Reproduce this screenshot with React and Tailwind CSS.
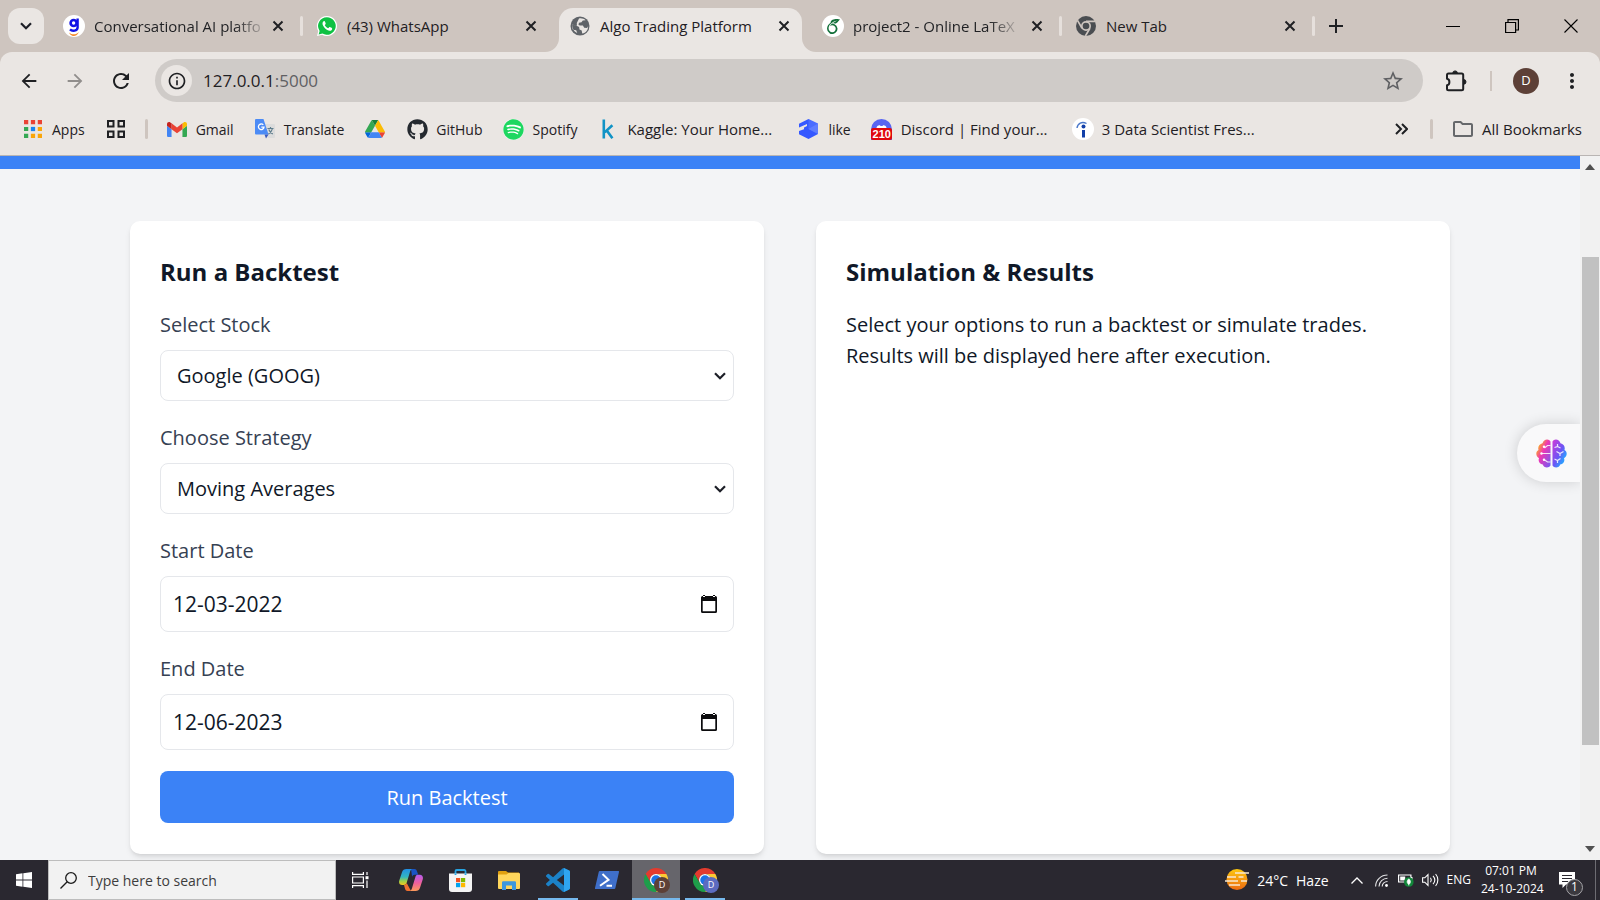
import React from "react";
import { FaGithub, FaSpotify } from "react-icons/fa";
import { SiOverleaf } from "react-icons/si";
import {
  MdArrowBack,
  MdArrowForward,
  MdRefresh,
  MdOutlineInfo,
  MdStarOutline,
  MdMoreVert,
  MdOutlineFolder,
} from "react-icons/md";

/* ---------- icons ---------- */

const Cross = () => (
  <svg viewBox="0 0 12 12" className="size-3" stroke="#1f2023" strokeWidth="2" fill="none">
    <path d="M1.5 1.5l9 9M10.5 1.5l-9 9" />
  </svg>
);

const ChevronDown = () => (
  <svg viewBox="0 0 12 8" className="h-2 w-3" fill="none" stroke="#1d1f27" strokeWidth="2.2">
    <path d="M1 1.2l5 5 5-5" />
  </svg>
);

const GlobeIcon = () => (
  <svg viewBox="0 0 20 20" className="size-5">
    <circle cx="10" cy="10" r="9.5" fill="#5f6368" />
    <path
      fill="#eae6e3"
      d="M9 2.400c2.800-.4 5 .3 6.600 1.800l-2.800.3-1.300 1.800-2.600.5-.4 1.900 1.300.9h3.100l1.300 2.200 2.900.2 1-1.700c.2 3.400-2.200 6.700-5.900 7.300l-.5-3-2.200-1.200-.4-2.300L6 9.400l-3.500-.6c-.5 1.700-.3 3.500.4 4.900l3.300.6 1 2.700c-3.500-1.600-5.200-5.200-4.600-8.200l2.800.6h1.500L6.800 7z"
    />
  </svg>
);

const LetterGIcon = () => (
  <svg viewBox="0 0 22 22" className="size-[22px]">
    <circle cx="11" cy="11" r="11" fill="#fff" />
    <circle cx="10.6" cy="8" r="3" fill="none" stroke="#1212e6" strokeWidth="2.6" />
    <path d="M14.6 3.6v9c0 3.4-5.4 4.2-7.6 1.8" fill="none" stroke="#1212e6" strokeWidth="2.4" />
    <path d="M6 17.4c3 2.6 7 2.6 10-.4-1.600 3.400-3.600 4-5 4s-4-.8-5-3.600z" fill="#f58a2a" />
  </svg>
);

const WhatsappIcon = () => (
  <svg viewBox="0 0 22 22" className="size-[22px]">
    <path d="M11 1a10 10 0 1 1-4.900 18.700L1 21l1.300-5A10 10 0 0 1 11 1z" fill="#fff" />
    <path d="M11 2.200a8.800 8.800 0 1 1-4.500 16.400l-3.900 1 1-3.700A8.800 8.800 0 0 1 11 2.200z" fill="#0fc143" />
    <path
      d="M8.300 6c-.5 0-1.800.8-1.800 2.500 0 2.900 4.200 7.300 7.200 7.300 1.500 0 2.500-1 2.500-2.100 0-.6-2.200-1.700-2.700-1.600-.5.100-.9 1.300-1.400 1.200-1-.2-3-2.100-3.300-3-.1-.5.900-1 .9-1.500C9.700 8.100 8.900 6 8.300 6z"
      fill="#fff"
    />
  </svg>
);

const OverleafIcon = () => (
  <span className="flex size-[22px] items-center justify-center rounded-full bg-white text-[#13703a]">
    <SiOverleaf className="size-[15px]" />
  </span>
);

const ChromeGray = () => (
  <svg viewBox="0 0 48 48" className="size-5">
    <circle cx="24" cy="24" r="24" fill="#4a4d51" />
    <circle cx="24" cy="24" r="10" fill="none" stroke="#cec5bf" strokeWidth="4" />
    <path d="M24 13h22M14.500 29.500L3.500 10.500M33.500 29.500L22.500 48" stroke="#cec5bf" strokeWidth="4" />
  </svg>
);

const ChromeColor = () => (
  <svg viewBox="0 0 48 48" className="size-6">
    <path fill="#e33b2e" d="M24 12h20.800A24 24 0 0 0 3.200 12l10.400 18A12 12 0 0 1 24 12z" />
    <path fill="#fcc934" d="M44.800 12H24a12 12 0 0 1 10.400 18L24 48a24 24 0 0 0 20.800-36z" />
    <path fill="#1e9e4a" d="M3.200 12A24 24 0 0 0 24 48l10.400-18a12 12 0 0 1-20.800 0z" />
    <circle cx="24" cy="24" r="12" fill="#fff" />
    <circle cx="24" cy="24" r="9.500" fill="#1a73e8" />
  </svg>
);

const AppsIcon = () => (
  <svg viewBox="0 0 17 17" className="size-[18px]">
    <path fill="#ea4335" d="M0 0h4v4H0zM6.500 0h4v4h-4zM13 0h4v4h-4z" />
    <path fill="#34a853" d="M0 6.500h4v4H0zM0 13h4v4H0z" />
    <path fill="#1a85f0" d="M6.500 6.500h4v4h-4z" />
    <path fill="#f9a60a" d="M13 6.500h4v4h-4zM6.500 13h4v4h-4zM13 13h4v4h-4z" />
  </svg>
);

const TabGroupIcon = () => (
  <svg viewBox="0 0 18 18" className="size-[18px]" fill="none" stroke="#1f2023" strokeWidth="2">
    <path d="M1 1h5.500v5.500H1zM11.500 1H17v5.500h-5.500zM1 11.500h5.500V17H1zM11.500 11.500H17V17h-5.500z" />
  </svg>
);

const GmailIcon = () => (
  <svg viewBox="52 42 88 66" className="h-[15px] w-5">
    <path fill="#4285f4" d="M58 108h14V74L52 59v43c0 3.320 2.690 6 6 6" />
    <path fill="#34a853" d="M120 108h14c3.320 0 6-2.690 6-6V59l-20 15" />
    <path fill="#fbbc04" d="M120 48v26l20-15v-8c0-7.420-8.470-11.650-14.400-7.200" />
    <path fill="#ea4335" d="M72 74V48l24 18 24-18v26L96 92" />
    <path fill="#c5221f" d="M52 51v8l20 15V48l-5.600-4.200c-5.940-4.450-14.400-.22-14.400 7.200" />
  </svg>
);

const TranslateIcon = () => (
  <svg viewBox="0 0 20 20" className="size-5">
    <path fill="#dcdcdc" d="M8 5h11a1 1 0 0 1 1 1v12a1 1 0 0 1-1 1h-6z" />
    <path fill="none" stroke="#5f7d8c" strokeWidth="1.200" d="M12.500 9.500h6M15.500 8v1.500M17.500 9.500c-.5 2.500-2 4-4 5.500M13.800 10.500c.8 2 2.200 3.500 4 4.500" />
    <path fill="#4c8bf5" d="M1 0h7.500l5 15.500H1a1 1 0 0 1-1-1V1a1 1 0 0 1 1-1z" />
    <path fill="#3a5bc0" d="M9.500 15.500h4l-2.500 4z" />
    <path fill="none" stroke="#fff" strokeWidth="1.300" d="M8.300 5.900A2.800 2.800 0 1 0 9 8.100H6.300" />
  </svg>
);

const DriveIcon = () => (
  <svg viewBox="0 0 87.300 78" className="h-[18px] w-5">
    <path fill="#0066da" d="m6.600 66.850 3.850 6.650c.8 1.400 1.950 2.500 3.300 3.300l13.750-23.800h-27.500c0 1.550.4 3.100 1.200 4.500z" />
    <path fill="#34a853" d="m43.650 25-13.750-23.800c-1.350.8-2.500 1.900-3.300 3.300l-25.400 44a9.060 9.060 0 0 0-1.200 4.500h27.500z" />
    <path fill="#ea4335" d="m73.550 76.800c1.350-.8 2.500-1.900 3.300-3.300l1.600-2.750 7.650-13.250c.8-1.400 1.200-2.950 1.200-4.500h-27.500l5.850 11.500z" />
    <path fill="#188038" d="m43.650 25 13.750-23.800c-1.350-.8-2.900-1.200-4.500-1.200h-18.500c-1.600 0-3.150.45-4.500 1.200z" />
    <path fill="#4285f4" d="m59.800 53h-32.300l-13.750 23.800c1.350.8 2.900 1.200 4.500 1.200h50.800c1.600 0 3.150-.45 4.500-1.200z" />
    <path fill="#fbbc04" d="m73.400 26.500-12.700-22c-.8-1.400-1.950-2.500-3.300-3.300l-13.750 23.800 16.150 28h27.450c0-1.550-.4-3.100-1.200-4.500z" />
  </svg>
);

const KaggleIcon = () => (
  <svg viewBox="0 0 12 20" className="h-5 w-3" fill="none" stroke="#1093c6" strokeWidth="2.600">
    <path d="M1.800.5v19M10.400 6.300L2.600 13.400M4.600 11.200l5.800 8" />
  </svg>
);

const CubeIcon = () => (
  <svg viewBox="0 0 20 20" className="size-5">
    <path fill="#3558ff" d="M9.500 0L0 4.800v3.700l8-3.500v2L5 8.600v1.700L0 12v3.200L9.500 20l9.500-5V10z" />
    <path fill="#4a6cff" d="M9.500 0L19 4.500V15l-9.500-5z" />
    <path fill="#5f7dff" d="M9.500 10L19 4.500V15z" />
  </svg>
);

const DiscordBadge = () => (
  <span className="relative block size-[21px] overflow-hidden rounded-t-full bg-[#5865f2]">
    <svg viewBox="0 0 21 21" className="absolute inset-0 size-[21px]">
      <path fill="#fff" d="M6 7.500c1-1 2-1.200 3-1.200l.5.700h2l.5-.7c1 0 2 .2 3 1.200l1 2.500H5z" />
      <rect x="0" y="9" width="21" height="12" rx="2" fill="#e0070d" />
    </svg>
    <span className="absolute inset-x-0 bottom-0 text-center font-['Liberation_Sans',sans-serif] text-[11px] leading-[11px] font-bold text-white">210</span>
  </span>
);

const IndeedIcon = () => (
  <svg viewBox="0 0 22 22" className="size-[22px]">
    <circle cx="11" cy="11" r="11" fill="#fff" />
    <circle cx="11.500" cy="8.500" r="2" fill="#123fa8" />
    <path d="M11.500 12v7.500" stroke="#123fa8" strokeWidth="3" />
    <path d="M5 10c.5-4.500 5-7 9.500-4.500" fill="none" stroke="#4a77c9" strokeWidth="1.400" />
  </svg>
);

const PuzzleIcon = () => (
  <svg viewBox="0 0 22 22" className="size-[22px]">
    <path
      d="M2 5a1.500 1.500 0 0 1 1.500-1.500h13.200a1.500 1.500 0 0 1 1.500 1.500v13.700a1.500 1.500 0 0 1-1.500 1.500H3.500A1.500 1.500 0 0 1 2 18.700v-3.400c3.200-.4 3.200-6.200 0-6.600z"
      fill="none"
      stroke="#1f2023"
      strokeWidth="2"
      strokeLinejoin="round"
    />
    <path d="M7.800 3.200a2.300 2.300 0 0 1 4.600 0zM18.700 9.600a2.300 2.300 0 0 1 0 4.600z" fill="#1f2023" stroke="#1f2023" />
  </svg>
);

const CalendarIcon = () => (
  <svg viewBox="0 0 16 18" className="h-[18px] w-4">
    <path fill="#0b0b0d" d="M2 0h2v2H2zM12 0h2v2h-2zM0 2.500A1.500 1.500 0 0 1 1.500 1h13A1.500 1.500 0 0 1 16 2.500v14a1.500 1.500 0 0 1-1.500 1.500h-13A1.500 1.500 0 0 1 0 16.500zM1.700 6v10.300h12.600V6z" fillRule="evenodd" />
  </svg>
);

const BrainIcon = () => (
  <svg viewBox="0 0 31 29" className="h-[29px] w-[31px]">
    <defs>
      <linearGradient id="brain-left" x1="0" y1="0" x2="1" y2="1">
        <stop offset="0.200" stopColor="#fba02f" />
        <stop offset="0.450" stopColor="#ee36b4" />
        <stop offset="1" stopColor="#6d5cf6" />
      </linearGradient>
      <linearGradient id="brain-right" x1="0" y1="0" x2="1" y2="1">
        <stop offset="0" stopColor="#d13ad8" />
        <stop offset="0.500" stopColor="#6d55f4" />
        <stop offset="0.750" stopColor="#2f9bff" />
      </linearGradient>
    </defs>
    <path fill="url(#brain-left)" d="M14.500 2.500v24C13 29.500 7.500 29 6.800 25.500 3.500 25 1.800 22 3 19.200-.5 17.200-.5 12.500 2.500 11 1.500 7.500 3.500 4.800 6.500 4.200 7.500-.2 13-.8 14.500 2.500z" />
    <path fill="url(#brain-right)" d="M16.500 2.500v24c1.500 3 7 2.500 7.700-1 3.300-.5 5-3.500 3.800-6.300 3.500-2 3.500-6.700.5-8.200 1-3.500-1-6.200-4-6.800-1-4.400-6.500-5-8-1.700z" />
    <g fill="none" stroke="#fff" strokeWidth="1.200" opacity=".85">
      <path d="M14.500 6.500h-3L8.500 9M14.500 14.500H5.500M14.500 23h-3L8 20.500" />
      <path d="M18.500 8.500l3-1v-2.500M21.500 7.500l3 1.500M20.500 12.500l3.500 2 3.500-2M24 14.500v2.500M18.500 20l3 1.500 3-2M21.500 21.500v2.500" />
    </g>
    <g fill="#fff">
      <circle cx="8" cy="7.800" r="1.200" />
      <circle cx="5.500" cy="14.500" r="1.200" />
      <circle cx="8" cy="20.800" r="1.200" />
    </g>
  </svg>
);

const CopilotIcon = () => (
  <svg viewBox="0 0 24 22" className="h-[22px] w-6">
    <defs>
      <linearGradient id="cp-a" x1="0" y1="0" x2="0" y2="1">
        <stop offset="0" stopColor="#2190e6" />
        <stop offset="0.500" stopColor="#34b6c0" />
        <stop offset="0.750" stopColor="#9bd04a" />
        <stop offset="1" stopColor="#f4c61d" />
      </linearGradient>
      <linearGradient id="cp-b" x1="0" y1="0" x2="0" y2="1">
        <stop offset="0" stopColor="#b65cf0" />
        <stop offset="0.500" stopColor="#ee5f9c" />
        <stop offset="1" stopColor="#fb9a5a" />
      </linearGradient>
    </defs>
    <path fill="#1b54c4" d="M12 0h3.500c1.300 0 2 .8 2.400 2l1.300 3.800h-3.400c-1.500 0-2.300.8-2.700 2z" />
    <path fill="url(#cp-a)" d="M7.500 0h6c-1.200 0-1.900.9-2.400 2.400L7.600 14c-.4 1.300-1.200 2-2.600 2H3.200C.7 16-.4 14 .2 11.800L3 3.200C3.700 1.100 5.200 0 7.500 0z" />
    <path fill="#f07030" d="M12 22H8.500c-1.300 0-2-.8-2.400-2L5 16c1.500 0 2.300-.8 2.700-2z" />
    <path fill="url(#cp-b)" d="M16.500 22h-6c1.200 0 1.900-.9 2.400-2.400L16.400 8c.4-1.300 1.200-2.200 2.600-2.200h1.800c2.500 0 3.600 2.200 3 4.400L21 18.800c-.7 2.100-2.200 3.200-4.500 3.200z" />
  </svg>
);

const StoreIcon = () => (
  <svg viewBox="0 0 23 23" className="size-[23px]">
    <path d="M6.500 6V2.200A1.200 1.200 0 0 1 7.700 1h7.600a1.200 1.200 0 0 1 1.200 1.200V6" fill="none" stroke="#27a3e0" strokeWidth="1.800" />
    <path d="M0 4.500h23V20a3 3 0 0 1-3 3H3a3 3 0 0 1-3-3z" fill="#f4f4f4" />
    <path d="M6.500 4.500V6M16.500 4.500V6" stroke="#27a3e0" strokeWidth="1.800" />
    <path fill="#f25022" d="M7 9h4.200v4.200H7z" />
    <path fill="#7fba00" d="M12 9h4.200v4.200H12z" />
    <path fill="#00a4ef" d="M7 14h4.200v4.200H7z" />
    <path fill="#ffb900" d="M12 14h4.200v4.200H12z" />
  </svg>
);

const ExplorerIcon = () => (
  <svg viewBox="0 0 22 19" className="h-[19px] w-[22px]">
    <path fill="#e0a010" d="M0 1a1 1 0 0 1 1-1h7l2 1.500H21V5H0z" />
    <path fill="#ffd65c" d="M0 3.500h8.500L10.500 2H21a1 1 0 0 1 1 1v14a1 1 0 0 1-1 1H1a1 1 0 0 1-1-1z" />
    <path fill="#3c97dd" d="M4 19v-7.500a1.200 1.200 0 0 1 1.200-1.200h11.600a1.200 1.200 0 0 1 1.200 1.200V19h-4v-4.500H8V19z" />
  </svg>
);

const VscodeIcon = () => (
  <svg viewBox="0 0 24 24" className="size-6">
    <path
      fill="#1b82c8"
      d="M23.150 2.587L18.210.21a1.494 1.494 0 0 0-1.705.29l-9.460 8.630-4.120-3.128a.999.999 0 0 0-1.276.057L.327 7.261A1 1 0 0 0 .326 8.740L3.899 12 .326 15.260a1 1 0 0 0 .001 1.479L1.650 17.940a.999.999 0 0 0 1.276.057l4.120-3.128 9.460 8.630a1.492 1.492 0 0 0 1.704.29l4.942-2.377A1.500 1.500 0 0 0 24 20.060V3.939a1.500 1.500 0 0 0-.85-1.352zm-5.146 14.861L10.826 12l7.178-5.448v10.896z"
    />
    <path fill="#2fa5f0" d="M18 .1l5.150 2.487A1.500 1.500 0 0 1 24 3.940v16.120a1.500 1.500 0 0 1-.85 1.350L18 23.900z" />
  </svg>
);

const PowershellIcon = () => (
  <svg viewBox="0 0 24 18" className="h-[18px] w-6">
    <path fill="#3f6fc9" d="M4.800 0h18.400a.8.800 0 0 1 .8 1l-3.700 16.200a1 1 0 0 1-1 .8H.8a.8.800 0 0 1-.8-1L3.800.8a1 1 0 0 1 1-.8z" />
    <path d="M7.500 3l6 5.800-8.500 6M11.500 14.800h5.500" fill="none" stroke="#fff" strokeWidth="2" />
  </svg>
);

const HazeIcon = () => (
  <svg viewBox="0 0 24 22" className="h-[22px] w-6">
    <defs>
      <linearGradient id="haze" x1="0" y1="0" x2="0" y2="1">
        <stop offset="0" stopColor="#fdc80f" />
        <stop offset="1" stopColor="#ec6a12" />
      </linearGradient>
    </defs>
    <circle cx="12" cy="10.500" r="10.500" fill="url(#haze)" />
    <path d="M10 4h14M2 8h9M13.500 8h5M0 12h13M16 12h6M4 16h11" stroke="#f7e7d2" strokeWidth="1.700" />
  </svg>
);

/* ---------- browser chrome ---------- */

const tabs = [
  { title: "Conversational AI platfo", icon: <LetterGIcon />, fade: true, divider: true },
  { title: "(43) WhatsApp", icon: <WhatsappIcon /> },
  { title: "Algo Trading Platform", icon: <GlobeIcon />, active: true },
  { title: "project2 - Online LaTeX", icon: <OverleafIcon />, fade: true, divider: true },
  { title: "New Tab", icon: <ChromeGray />, divider: true },
];

const Flare = ({ side }) => (
  <svg
    viewBox="0 0 14 14"
    className={side === "left" ? "absolute bottom-0 -left-3.5 size-3.5" : "absolute bottom-0 -right-3.5 size-3.5"}
  >
    <path fill="#eae6e3" d={side === "left" ? "M14 0v14H0A14 14 0 0 0 14 0z" : "M0 0v14h14A14 14 0 0 1 0 0z"} />
  </svg>
);

function Tab({ tab }) {
  return (
    <div className="flex h-full min-w-0 shrink basis-[253px] items-stretch">
      <div
        className={
          tab.active
            ? "relative flex min-w-0 flex-1 items-center rounded-t-[14px] bg-[#eae6e3] pr-2 pb-2 pl-2.5"
            : "relative flex min-w-0 flex-1 items-center pr-2 pb-2 pl-2.5"
        }
      >
        {tab.active && <Flare side="left" />}
        {tab.active && <Flare side="right" />}
        <span className="flex w-[22px] shrink-0 justify-center">{tab.icon}</span>
        <span
          className={
            tab.fade
              ? "ml-[9px] shrink-0 text-[15px] whitespace-nowrap [mask-image:linear-gradient(to_right,black_84%,rgba(0,0,0,0.2))]"
              : "ml-[9px] shrink-0 text-[15px] whitespace-nowrap"
          }
        >
          {tab.title}
        </span>
        <button type="button" aria-label={"Close " + tab.title} className="ml-auto flex size-5 shrink-0 items-center justify-center">
          <Cross />
        </button>
      </div>
      <div className="flex w-2.5 shrink-0 items-center justify-center pb-2">
        {tab.divider && <span className="h-5 w-[3px] rounded bg-[#e6e0dc]" />}
      </div>
    </div>
  );
}

function TabStrip() {
  return (
    <div className="flex h-[52px] bg-[#cec5bf] pt-2">
      <button type="button" aria-label="Search tabs" className="ml-2 flex size-9 shrink-0 items-center justify-center rounded-xl bg-[#eae6e3]">
        <ChevronDown />
      </button>
      <div className="ml-[9px] flex min-w-0 flex-1">
        {tabs.map((t) => (
          <Tab key={t.title} tab={t} />
        ))}
        <button type="button" aria-label="New tab" className="ml-2.5 flex h-9 w-4 shrink-0 items-center justify-center">
          <svg viewBox="0 0 14 14" className="size-3.5" stroke="#1f2023" strokeWidth="2">
            <path d="M7 0v14M0 7h14" />
          </svg>
        </button>
      </div>
      <div className="flex h-9 shrink-0 items-center">
        <button type="button" aria-label="Minimize" className="flex w-[59px] justify-center">
          <svg viewBox="0 0 14 14" className="size-3.5" fill="none" stroke="#000">
            <path d="M0 7.500h14" />
          </svg>
        </button>
        <button type="button" aria-label="Restore" className="flex w-[59px] justify-center">
          <svg viewBox="0 0 14 14" className="size-3.5" fill="none" stroke="#000" strokeWidth="1.200">
            <path d="M.6 3.500h10v10h-10zM3 3.500V.6h10.400V11h-2.800" />
          </svg>
        </button>
        <button type="button" aria-label="Close window" className="flex w-[59px] justify-center">
          <svg viewBox="0 0 14 14" className="size-3.5" fill="none" stroke="#000" strokeWidth="1.100">
            <path d="M.5.500l13 13M13.500.500l-13 13" />
          </svg>
        </button>
      </div>
    </div>
  );
}

function Toolbar() {
  return (
    <div className="flex items-center rounded-t-xl bg-[#eae6e3] py-[7px] pr-4 pl-[18px]">
      <button type="button" aria-label="Back">
        <MdArrowBack className="size-[22px] text-[#1f2023]" />
      </button>
      <button type="button" aria-label="Forward" className="ml-6">
        <MdArrowForward className="size-[22px] text-[#918e8c]" />
      </button>
      <button type="button" aria-label="Reload" className="ml-[23px]">
        <MdRefresh className="size-6 text-[#1f2023]" />
      </button>
      <div className="ml-[22px] flex h-[43px] flex-1 items-center rounded-full bg-[#cfcbc8] pr-[18px] pl-1.5">
        <button type="button" aria-label="View site information" className="flex size-[31px] items-center justify-center rounded-full bg-[#eae6e3]">
          <MdOutlineInfo className="size-5 text-[#1f2023]" />
        </button>
        <div className="relative ml-[11px] flex-1 text-[17px] leading-6">
          <span aria-hidden="true" className="text-[#1f2023]">
            127.0.0.1<span className="text-[#5f6063]">:5000</span>
          </span>
          <input aria-label="Address" defaultValue="127.0.0.1:5000" className="absolute inset-0 w-full text-transparent outline-none" />
        </div>
        <button type="button" aria-label="Bookmark this tab">
          <MdStarOutline className="size-6 text-[#5f6063]" />
        </button>
      </div>
      <button type="button" aria-label="Extensions" className="ml-[22px]">
        <PuzzleIcon />
      </button>
      <span className="ml-[23px] h-5 w-0.5 bg-[#cec5bf]" />
      <button type="button" aria-label="Profile" className="ml-[21px] flex size-[26px] items-center justify-center rounded-full bg-[#5d4037] text-[13px] text-white">
        D
      </button>
      <button type="button" aria-label="Menu" className="ml-[21px]">
        <MdMoreVert className="size-6 text-[#1f2023]" />
      </button>
    </div>
  );
}

const Divider = () => <span className="h-5 w-[3px] shrink-0 rounded bg-[#cec5bf]" />;

const bookmarks = [
  { label: "Gmail", icon: <GmailIcon /> },
  { label: "Translate", icon: <TranslateIcon /> },
  { label: "", name: "Drive", icon: <DriveIcon /> },
  { label: "GitHub", icon: <FaGithub className="size-[21px] text-[#24292f]" /> },
  {
    label: "Spotify",
    icon: (
      <span className="rounded-full bg-white">
        <FaSpotify className="size-[21px] text-[#1ed760]" />
      </span>
    ),
  },
  { label: "Kaggle: Your Home...", icon: <KaggleIcon />, long: true },
  { label: "like", icon: <CubeIcon /> },
  { label: "Discord | Find your...", icon: <DiscordBadge />, long: true },
  { label: "3 Data Scientist Fres...", icon: <IndeedIcon />, long: true },
];

function BookmarkBar() {
  return (
    <nav aria-label="Bookmarks" className="border-b border-[#b9b5b3] bg-[#eae6e3] pb-1.5">
      <div className="flex h-10 items-center pr-[18px] pl-6 text-[14px] whitespace-nowrap text-[#1f2023]">
        <a href="#apps" className="flex items-center gap-2.5">
          <AppsIcon />
          Apps
        </a>
        <button type="button" aria-label="Tab groups" className="mr-5 ml-[22px]">
          <TabGroupIcon />
        </button>
        <Divider />
        <div className="ml-[18px] flex items-center gap-5">
          {bookmarks.map((b) => (
            <a key={b.label} href="#bookmark" aria-label={b.label || b.name} className="flex items-center gap-2">
              <span className="flex w-[22px] justify-center">{b.icon}</span>
              {b.label && <span className={b.long ? "min-w-[151px] text-[15px]" : ""}>{b.label}</span>}
            </a>
          ))}
        </div>
        <button type="button" aria-label="More bookmarks" className="mr-[22px] ml-auto">
          <svg viewBox="0 0 13 12" className="h-3 w-[13px]" fill="none" stroke="#1f2023" strokeWidth="2">
            <path d="M1 1l5 5-5 5M7 1l5 5-5 5" />
          </svg>
        </button>
        <Divider />
        <a href="#all" className="ml-[18px] flex items-center gap-[7px] text-[15px]">
          <MdOutlineFolder className="size-6 text-[#66686b]" />
          All Bookmarks
        </a>
      </div>
    </nav>
  );
}

/* ---------- page ---------- */

function SelectField({ id, label, options }) {
  return (
    <div className="mb-[21px]">
      <label htmlFor={id} className="mb-2.5 block text-gray-700">
        {label}
      </label>
      <div className="relative">
        <select id={id} className="h-[51px] w-full appearance-none rounded-lg border border-gray-200 bg-white px-4 text-gray-900">
          {options.map((o) => (
            <option key={o}>{o}</option>
          ))}
        </select>
        <span className="pointer-events-none absolute top-[22px] right-2">
          <ChevronDown />
        </span>
      </div>
    </div>
  );
}

function DateField({ id, label, value }) {
  return (
    <div className="mb-[21px]">
      <label htmlFor={id} className="mb-2.5 block text-gray-700">
        {label}
      </label>
      <div className="flex h-14 items-center rounded-lg border border-gray-200 bg-white pr-4 pl-3">
        <input id={id} type="text" defaultValue={value} className="min-w-0 flex-1 text-[21px] text-gray-900 outline-none" />
        <button type="button" aria-label={"Open calendar for " + label}>
          <CalendarIcon />
        </button>
      </div>
    </div>
  );
}

const cardClass = "rounded-[10px] bg-white px-[30px] py-[31px] shadow-md";

function Page() {
  return (
    <div className="relative flex min-h-0 flex-1 overflow-hidden">
      <main className="min-w-0 flex-1 bg-gray-100 text-[20px] leading-[31px] text-gray-900">
        <div className="h-[13px] bg-[#3b82f6]" />
        <div className="mx-auto grid max-w-[1320px] grid-cols-2 gap-[52px] pt-[52px]">
          <section className={cardClass}>
            <h2 className="mb-[18px] text-2xl leading-[39px] font-bold">Run a Backtest</h2>
            <form onSubmit={(e) => e.preventDefault()}>
              <SelectField id="stock" label="Select Stock" options={["Google (GOOG)"]} />
              <SelectField id="strategy" label="Choose Strategy" options={["Moving Averages"]} />
              <DateField id="start" label="Start Date" value="12-03-2022" />
              <DateField id="end" label="End Date" value="12-06-2023" />
              <button type="submit" className="block h-[52px] w-full rounded-lg bg-[#3b82f6] text-white">
                Run Backtest
              </button>
            </form>
          </section>
          <section className={cardClass}>
            <h2 className="mb-[18px] text-2xl leading-[39px] font-bold">Simulation &amp; Results</h2>
            <p>Select your options to run a backtest or simulate trades. Results will be displayed here after execution.</p>
          </section>
        </div>
      </main>
      <div className="flex w-5 shrink-0 flex-col items-center bg-[#f1f1f1] py-2">
        <svg viewBox="0 0 10 6" className="h-1.5 w-2.5" fill="#505050">
          <path d="M5 0l5 6H0z" />
        </svg>
        <div className="flex w-full flex-1 flex-col pt-[87px] pr-px pb-[101px] pl-0.5">
          <div className="flex-1 bg-[#c1c1c1]" />
        </div>
        <svg viewBox="0 0 10 6" className="h-1.5 w-2.5" fill="#505050">
          <path d="M5 6l5-6H0z" />
        </svg>
      </div>
      <button
        type="button"
        aria-label="Assistant"
        className="absolute top-[268px] right-5 flex h-[58px] w-[63px] items-center rounded-l-full bg-[#f9f9fa] pl-[19px] shadow-[0_0_14px_rgba(0,0,0,0.16)] [clip-path:inset(-20px_0_-20px_-20px)]"
      >
        <BrainIcon />
      </button>
    </div>
  );
}

/* ---------- taskbar ---------- */

const taskApps = [
  { name: "Copilot", icon: <CopilotIcon /> },
  { name: "Store", icon: <StoreIcon /> },
  { name: "Explorer", icon: <ExplorerIcon /> },
  { name: "VS Code", icon: <VscodeIcon />, running: true },
  { name: "PowerShell", icon: <PowershellIcon /> },
  { name: "Chrome", icon: <ChromeColor />, focused: true, badge: "bg-[#5d4037]" },
  { name: "Chrome profile 2", icon: <ChromeColor />, running: true, badge: "bg-[#5c6bc0]" },
];

function TaskApp({ app }) {
  return (
    <button
      type="button"
      aria-label={app.name}
      className={
        app.focused
          ? "relative flex h-full w-12 items-center justify-center bg-[#66656b]"
          : "relative flex h-full w-12 items-center justify-center"
      }
    >
      {app.icon}
      {app.badge && (
        <span className={"absolute top-[17px] left-[22px] flex size-4 items-center justify-center rounded-full text-[9px] text-white " + app.badge}>D</span>
      )}
      {app.focused && <span className="absolute inset-x-0 bottom-0 h-0.5 bg-[#76b9ed]" />}
      {app.running && <span className="absolute inset-x-1 bottom-0 h-0.5 bg-[#76b9ed]" />}
    </button>
  );
}

function Taskbar() {
  return (
    <footer className="flex h-10 shrink-0 items-center bg-[#2a2830] text-[14px] text-white">
      <button type="button" aria-label="Start" className="flex w-12 justify-center">
        <svg viewBox="0 0 16 16" className="size-4" fill="#fff">
          <path d="M0 2.200l6.500-.9v6.300H0zM7.300 1.200L16 0v7.600H7.300zM0 8.400h6.500v6.300L0 13.800zM7.300 8.400H16V16l-8.700-1.200z" />
        </svg>
      </button>
      <div className="flex h-full w-72 items-center border border-[#bdbdbd] bg-[#f2f2f2] pl-[11px]">
        <svg viewBox="0 0 17 17" className="size-[17px]" fill="none" stroke="#1b1b1b" strokeWidth="1.300">
          <circle cx="11" cy="6" r="5.300" />
          <path d="M7.200 9.800L.5 16.500" />
        </svg>
        <input aria-label="Type here to search" placeholder="Type here to search" className="ml-[11px] min-w-0 flex-1 text-[14px] outline-none placeholder:text-[#3d3d3d]" />
      </div>
      <button type="button" aria-label="Task view" className="flex w-12 justify-center">
        <svg viewBox="0 0 17 16" className="h-4 w-[17px]" fill="none" stroke="#fff" strokeWidth="1.200">
          <path d="M.6 0v2.400h10.800V0M.6 5h10.800v6H.6zM.6 16v-2.400h10.800V16M15 0v3M15 8.500V16" />
          <path d="M13.500 4.200h3v3h-3z" fill="#fff" stroke="none" />
        </svg>
      </button>
      <div className="ml-[3px] flex h-full items-center gap-px">
        {taskApps.map((a) => (
          <TaskApp key={a.name} app={a} />
        ))}
      </div>
      <div className="ml-auto flex h-full items-center">
        <HazeIcon />
        <span className="ml-2">24°C</span>
        <span className="ml-2">Haze</span>
        <svg viewBox="0 0 12 7" className="ml-[22px] h-[7px] w-3" fill="none" stroke="#fff" strokeWidth="1.300">
          <path d="M.5 6.500L6 1l5.500 5.500" />
        </svg>
        <svg viewBox="0 0 13 13" className="ml-3 size-[13px]" fill="none" stroke="#e4e4e6" strokeWidth="1.100">
          <path d="M.6 12.500C.6 6 6 1 12.500 1M4 12.500C4 8 8 4.300 12.500 4.300M7.200 12.500c0-2.800 2.400-5 5.300-5" />
          <circle cx="11.500" cy="11.500" r="1.400" fill="#fff" stroke="none" />
        </svg>
        <svg viewBox="0 0 16 14" className="ml-2.5 h-3.5 w-4">
          <path d="M.6 2h12.300v7H.6z" fill="none" stroke="#fff" strokeWidth="1.200" />
          <path d="M2.200 3.600h5v3.800h-5zM13 4h1.500v3H13z" fill="#fff" />
          <circle cx="10.800" cy="9" r="4.800" fill="#12873a" />
          <path d="M10.800 5.800c2.200 2 2.200 4.200 0 5.600-2.200-1.400-2.200-3.600 0-5.600zM10.800 9v3.500" fill="#fff" stroke="#fff" strokeWidth=".7" />
        </svg>
        <svg viewBox="0 0 17 14" className="ml-2 h-3.5 w-[17px]" fill="none" stroke="#fff" strokeWidth="1.100">
          <path d="M.6 4.800h2.200L6 1.500v11L2.800 9.200H.6zM8.500 4.800c1 1.400 1 3 0 4.400M11 2.800c2.200 2.500 2.200 5.900 0 8.400M13.600 1c3 3.500 3 8.500 0 12" />
        </svg>
        <span className="ml-2 text-[12px]">ENG</span>
        <div className="ml-2.5 w-[60px] text-center text-[12px] leading-[18px] whitespace-nowrap">
          <div>07:01 PM</div>
          <div>24-10-2024</div>
        </div>
        <button type="button" aria-label="Notifications" className="relative ml-[18px] h-full w-6">
          <span className="absolute top-3 left-0">
            <svg viewBox="0 0 24 24" className="size-6">
              <path fill="#fff" d="M0 0h16v12.500H7l-3.500 3.500v-3.500H0z" />
              <path d="M3 3.500h10M3 6.500h10M3 9.500h6" stroke="#2a2830" strokeWidth="1.200" />
              <circle cx="15.500" cy="15.500" r="8" fill="#3b393f" stroke="#a5a4a8" />
            </svg>
          </span>
          <span className="absolute top-5 right-0 w-[17px] text-center text-[12px] leading-[14px]">1</span>
        </button>
        <span className="mr-1 ml-3 h-full w-px bg-[#6d6c72]" />
      </div>
    </footer>
  );
}

export default function App() {
  return (
    <div className="flex h-screen flex-col overflow-hidden bg-[#cec5bf] font-['Open_Sans','Noto_Sans',sans-serif] text-[#1f2023]">
      <header className="shrink-0">
        <TabStrip />
        <Toolbar />
        <BookmarkBar />
      </header>
      <Page />
      <Taskbar />
    </div>
  );
}
